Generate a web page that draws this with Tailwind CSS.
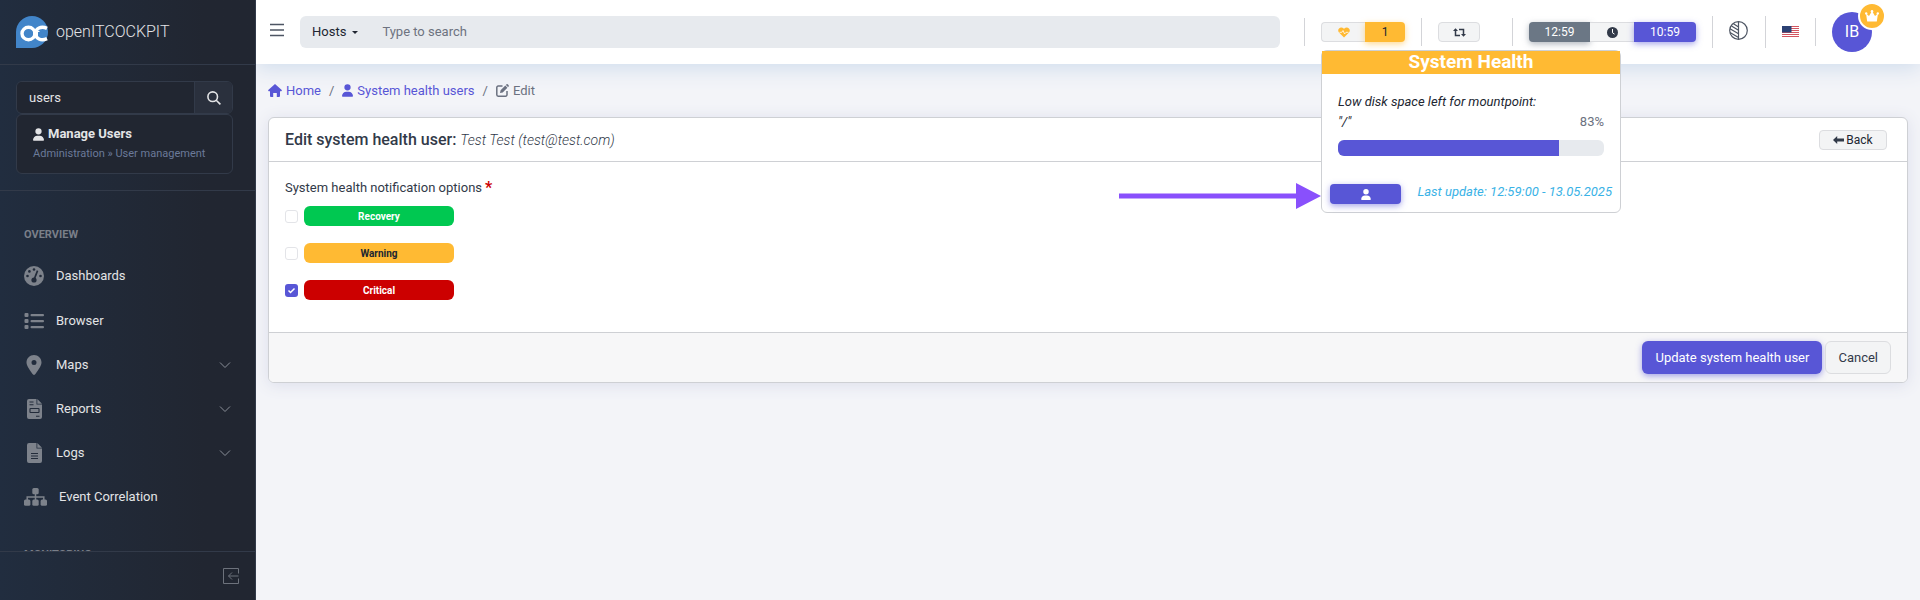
<!DOCTYPE html>
<html lang="en">
<head>
<meta charset="utf-8">
<title>openITCOCKPIT</title>
<script src="https://cdn.jsdelivr.net/npm/@tailwindcss/browser@4"></script>
</head>
<body class="font-[Roboto,sans-serif] text-[13px] text-[#323a49] bg-[#f3f4f8] min-h-screen flex">
<svg class="hidden">
  <symbol id="user" viewBox="0 0 448 512"><path d="M224 256A128 128 0 1 0 224 0a128 128 0 1 0 0 256zm-45.700 48C79.800 304 0 383.800 0 482.300C0 498.700 13.300 512 29.700 512H418.300c16.400 0 29.700-13.300 29.700-29.700C448 383.800 368.200 304 269.700 304H178.300z"/></symbol>
  <symbol id="chev" viewBox="0 0 12 8"><path d="M1 1.500 6 6.500 11 1.500" fill="none" stroke="currentColor" stroke-width="1"/></symbol>
</svg>

<aside class="relative z-10 w-64 h-screen shrink-0 flex flex-col border-r border-[#323a49] bg-linear-to-r from-[#212d3f] to-[#212631] to-80% text-[#e3e4e6]">
  <a href="#" class="h-16 shrink-0 flex items-center gap-2 px-4"><svg class="size-8" viewBox="0 0 32 32"><path d="M16 0A16 16 0 1 1 16 32H0V16A16 16 0 0 1 16 0Z" fill="#4285c9"/><g fill="none" stroke="#fff" stroke-width="3.400"><ellipse cx="12.500" cy="17.500" rx="6.500" ry="6.200"/><path d="M31 12.400C25 9.500 19.500 12.500 19.500 17.500S25 25.500 31 22.600"/></g><path d="M17.500 15.500V20M19.500 15.500h4M21.500 15.500V20" stroke="#fff" stroke-width="1" fill="none"/></svg>
    <span class="text-base font-light">openITCOCKPIT</span>
  </a>
  <div class="pl-4 pt-4 pb-4 pr-[22px] border-y border-[#323a49]">
    <form class="flex h-[33px] border border-[#323a49] rounded-md overflow-hidden">
      <input aria-label="Search menu" value="users" class="min-w-0 flex-1 bg-[#212631] px-3 outline-none">
      <button type="button" aria-label="Search" class="w-[38px] bg-[#2a303d] border-l border-[#323a49] flex items-center justify-center"><svg class="size-3.5" viewBox="0 0 14 14" fill="none" stroke="currentColor" stroke-width="1.600"><circle cx="5.700" cy="5.700" r="4.800"/><path d="m9.200 9.200 4.200 4.200"/></svg></button>
    </form>
    <a href="#" class="block border border-[#323a49] rounded-md bg-[#212631] px-4 py-[9px]">
      <span class="flex items-center gap-1 font-bold leading-5"><svg class="w-[11px] h-[13px]" fill="currentColor"><use href="#user"/></svg>Manage Users</span>
      <span class="block text-[11px] leading-5 text-[#6b7a99]">Administration » User management</span>
    </a>
  </div>
  <nav class="flex-1 min-h-0 overflow-hidden px-6 pt-9">
    <h2 class="text-[11px] leading-4 font-bold text-[#7a7f89]">OVERVIEW</h2>
    <ul class="pt-[11px]">
      <li><a href="#" class="flex items-center h-11 gap-3"><svg class="size-5 text-[#7d828b]" viewBox="0 0 20 20"><circle cx="10" cy="10" r="10" fill="currentColor"/><g fill="#222b3a"><circle cx="10" cy="3.500" r="1.300"/><circle cx="5.400" cy="5.400" r="1.300"/><circle cx="3.500" cy="10" r="1.300"/><circle cx="16.500" cy="10" r="1.300"/><circle cx="10" cy="14" r="2.600"/><path d="m12.800 4.300 1.500.6-3.400 9-1.600-.6z"/></g></svg>Dashboards</a></li>
      <li><a href="#" class="flex items-center h-[45px] gap-3"><svg class="size-5 text-[#7d828b]" viewBox="0 0 20 20" fill="currentColor"><rect x="0.500" y="2" width="4" height="4" rx="1"/><rect x="0.500" y="8" width="4" height="4" rx="1"/><rect x="0.500" y="14" width="4" height="4" rx="1"/><rect x="6.500" y="2.900" width="13.500" height="2.300" rx="1"/><rect x="6.500" y="8.900" width="13.500" height="2.300" rx="1"/><rect x="6.500" y="14.900" width="13.500" height="2.300" rx="1"/></svg>Browser</a></li>
      <li><a href="#" class="flex items-center h-11 gap-3"><svg class="size-5 text-[#7d828b]" viewBox="-64 0 512 512" fill="currentColor"><path d="M215.700 499.200C267 435 384 279.400 384 192C384 86 298 0 192 0S0 86 0 192c0 87.400 117 243 168.300 307.200c12.300 15.300 35.100 15.300 47.400 0zM192 128a64 64 0 1 1 0 128 64 64 0 1 1 0-128z"/></svg><span class="flex-1">Maps</span><svg class="w-3 h-2 text-[#8a8f98]"><use href="#chev"/></svg></a></li>
      <li><a href="#" class="flex items-center h-11 gap-3"><svg class="size-5 text-[#7d828b]" viewBox="0 0 20 20"><path fill="currentColor" d="M5 0H12.500v5.500H18V18a2 2 0 0 1-2 2H5a2 2 0 0 1-2-2V2A2 2 0 0 1 5 0ZM13.300 0 18 4.700h-4.700z"/><g stroke="#222b3a" stroke-width="1.100" fill="none"><path d="M5.500 3H9.500M5.500 5.700H9.500M12 17.300h3.500"/><rect x="6" y="9.500" width="9" height="4" rx=".5"/></g></svg><span class="flex-1">Reports</span><svg class="w-3 h-2 text-[#8a8f98]"><use href="#chev"/></svg></a></li>
      <li><a href="#" class="flex items-center h-11 gap-3"><svg class="size-5 text-[#7d828b]" viewBox="0 0 20 20"><path fill="currentColor" d="M5 0H12.500v5.500H18V18a2 2 0 0 1-2 2H5a2 2 0 0 1-2-2V2A2 2 0 0 1 5 0ZM13.300 0 18 4.700h-4.700z"/><path d="M7 10.500h7M7 13h7M7 15.500h7" stroke="#222b3a" stroke-width="1.200"/></svg><span class="flex-1">Logs</span><svg class="w-3 h-2 text-[#8a8f98]"><use href="#chev"/></svg></a></li>
      <li><a href="#" class="flex items-center h-11 gap-3"><svg class="w-[23px] h-[18px] text-[#7d828b]" viewBox="0 0 23 18" fill="currentColor"><rect x="8.300" y="0" width="6.400" height="6.200" rx="1.500"/><rect x="0" y="11.500" width="6.400" height="6.200" rx="1.500"/><rect x="8.300" y="11.500" width="6.400" height="6.200" rx="1.500"/><rect x="16.600" y="11.500" width="6.400" height="6.200" rx="1.500"/><path d="M3.200 12V9h16.600v3M11.500 5v7" fill="none" stroke="currentColor" stroke-width="1.500"/></svg>Event Correlation</a></li>
    </ul>
    <h2 class="pt-7 text-[11px] leading-4 font-bold text-[#7a7f89]">MONITORING</h2>
  </nav>
  <div class="h-[49px] shrink-0 border-t border-[#323a49] flex items-center justify-end pr-4">
    <button type="button" aria-label="Collapse sidebar" class="text-[#6d727c]"><svg class="size-4" viewBox="0 0 16 16" fill="none" stroke="currentColor"><path d="M15.500 5.500v-5H.5v15h15v-5M15.500 8H5.500M9 4.500 5.500 8 9 11.500"/></svg></button>
  </div>
</aside>

<div class="flex-1 min-w-0 flex flex-col">
  <header class="h-16 shrink-0 bg-white shadow-[0_4px_20px_#cfdcec] flex items-center pl-3.5 pr-12">
    <button type="button" aria-label="Toggle menu" class="mr-4 mb-1"><svg class="w-3.5 h-4" viewBox="0 0 14 16" stroke="#4d5563" stroke-width="1.300"><path d="M0 2.500h14M0 8h14M0 13.500h14"/></svg></button>
    <div class="flex-1 flex h-8 rounded-md bg-[#e7eaee] overflow-hidden">
      <button type="button" class="flex items-center gap-1.5 px-3 text-[#212631]">Hosts<svg class="w-1.5 h-[3px]" viewBox="0 0 6 3"><path d="M0 0h6L3 3z" fill="#212631"/></svg></button>
      <input aria-label="Search" placeholder="Type to search" class="flex-1 px-3 outline-none placeholder:text-[#6d7380]">
    </div>
    <div class="ml-6 h-7 border-l border-[#d3d4d8]"></div>
    <div class="relative ml-4">
      <button type="button" aria-label="System health: 1" class="flex h-5 rounded text-xs">
        <span class="w-11 flex items-center justify-center rounded-l bg-[#f3f4f5] border border-r-0 border-[#dcdde0]"><svg class="w-3 h-[11px]" viewBox="0 0 12 11"><path d="M6 10.500 1 5.600C-1.500 2.500 2.500-1.500 6 1.800 9.500-1.500 13.500 2.500 11 5.600z" fill="#ffb932"/><path d="M1.500 5.300h2.300L5 3.500l1.600 3.500L8 5.300h2.500" fill="none" stroke="#fff" stroke-width=".8"/></svg></span>
        <span class="w-10 flex items-center justify-center rounded-r bg-[#ffba33] text-[#212631] shadow-[0_2px_6px_#ffba3388]">1</span>
      </button>
      <section class="absolute z-20 left-0 top-7 w-[300px] bg-white border border-[#ced0d4] rounded-md">
        <h2 class="h-[23px] flex items-center justify-center bg-[#ffba33] text-white text-[19px] font-bold">System Health</h2>
        <div class="px-4 pt-[18px] leading-5">
          <p class="italic text-[#212631]">Low disk space left for mountpoint:</p>
          <div class="flex justify-between"><span class="italic text-[#212631]">"/"</span><span class="text-[#6b7180]">83%</span></div>
          <div role="progressbar" aria-valuenow="83" aria-label="Disk usage" class="mt-2 h-4 rounded-md bg-[#e7eaee] overflow-hidden"><div class="h-full bg-[#5856d6]" style="width:83%"></div></div>
        </div>
        <div class="flex items-center justify-between mt-6 px-2 pb-2 pt-1">
          <button type="button" aria-label="System health users" class="w-[71px] h-5 rounded bg-[#5856d6] text-white flex items-center justify-center shadow-[0_2px_6px_#5856d688]"><svg class="w-2.5 h-[11px]" fill="currentColor"><use href="#user"/></svg></button>
          <span class="italic leading-4 mb-1 text-[#39b2e6]">Last update: 12:59:00 - 13.05.2025</span>
        </div>
      </section>
      <svg class="absolute z-20 right-full top-[161px] w-[202px] h-[26px]" viewBox="0 0 202 26" fill="#8950fc"><path d="M0 10.500h177V0l25 13-25 13V15.500H0z"/></svg>
    </div>
    <div class="ml-4 h-7 border-l border-[#d3d4d8]"></div>
    <button type="button" aria-label="Reload" class="ml-4 w-[42px] h-5 rounded bg-[#f3f4f5] border border-[#dcdde0] flex items-center justify-center"><svg class="w-[13px] h-[9px]" viewBox="0 0 13 9" fill="none" stroke="#323a49" stroke-width="1.500"><path d="M2.500 1.500V7.500H7M6 1.500h4.500V7"/><path d="M0 3 2.500.3 5 3zM8 6l2.500 2.700L13 6z" fill="#323a49" stroke="none"/></svg></button>
    <div class="ml-8 h-7 border-l border-[#d3d4d8]"></div>
    <div class="ml-4 flex h-5 text-xs text-white">
      <span class="w-[61px] flex items-center justify-center rounded-l bg-[#6b7785] shadow-[0_2px_6px_#6b778588]">12:59</span>
      <span class="w-11 flex items-center justify-center bg-[#f3f4f5] border-y border-[#dcdde0]"><svg class="size-[11px]" viewBox="0 0 11 11"><circle cx="5.500" cy="5.500" r="5.500" fill="#323a49"/><path d="M5.500 2v3.800l2 1.300" fill="none" stroke="#fff"/></svg></span>
      <span class="w-[62px] flex items-center justify-center rounded-r bg-[#5856d6] shadow-[0_2px_6px_#5856d688]">10:59</span>
    </div>
    <div class="ml-4 h-8 border-l border-[#d3d4d8]"></div>
    <button type="button" aria-label="Theme" class="ml-4 mb-1"><svg class="size-[19px]" viewBox="0 0 19 19" fill="none" stroke="#4d5563" stroke-width="1.200"><circle cx="9.500" cy="9.500" r="8.800"/><path d="M9.500.7v17.600M4.500 2.700l5 3.300M2.500 5l7 4.300M1 7.800l8.500 5M1 11.500l8.500 5"/></svg></button>
    <div class="ml-[17px] h-8 border-l border-[#d3d4d8]"></div>
    <button type="button" aria-label="Language" class="ml-4"><svg class="w-[17px] h-3" viewBox="0 0 17 12"><path fill="#fff" d="M0 0h17v12H0z"/><path d="M0 .5h17M0 2.500h17M0 4.500h17M0 6.500h17M0 8.500h17M0 10.500h17" stroke="#d35560"/><path d="M0 0h9.500v6.500H0z" fill="#2b4173"/></svg></button>
    <div class="ml-4 h-7 border-l border-[#d3d4d8]"></div>
    <button type="button" aria-label="Account" class="relative ml-4 size-10 rounded-full bg-[#5856d6] text-white text-base">IB<span class="absolute -top-2.5 -right-3.5 size-7 rounded-full border-2 border-white bg-[#ffba33] flex items-center justify-center"><svg class="w-3.5 h-3" viewBox="0 0 14 12" fill="#fff"><path d="M1 3.500 4 6 7 1l3 5 3-2.500L11.800 11.500H2.200z"/><circle cx="1.200" cy="3.400" r="1.200"/><circle cx="7" cy="1.400" r="1.300"/><circle cx="12.800" cy="3.400" r="1.200"/></svg></span></button>
  </header>

  <main class="px-3">
    <nav aria-label="Breadcrumb" class="h-[53px] flex items-center gap-2 text-[#6b7180]">
      <a href="#" class="flex items-center gap-1 text-[#5856d6]"><svg class="w-3.5 h-[13px]" viewBox="0 0 14 13" fill="currentColor"><path d="M7 0 14 6.300 13.300 7.200H12V12a1 1 0 0 1-1 1H8.800V9H5.200v4H3a1 1 0 0 1-1-1V7.200H.7L0 6.300z"/></svg>Home</a><span>/</span>
      <a href="#" class="flex items-center gap-1 text-[#5856d6]"><svg class="w-[11px] h-[13px]" fill="currentColor"><use href="#user"/></svg>System health users</a><span>/</span>
      <span class="flex items-center gap-1"><svg class="size-[13px]" viewBox="0 0 13 13"><path d="M6.500 2H2.200A1.400 1.400 0 0 0 .8 3.400v7.400a1.400 1.400 0 0 0 1.400 1.400h7.400a1.400 1.400 0 0 0 1.400-1.400V7" fill="none" stroke="currentColor" stroke-width="1.500"/><path d="M4 9l.6-2.700L9.300 1.600l2.100 2.100L6.700 8.400zM9.900 1l.7-.7c.8-.8 2.900 1.300 2.100 2.100l-.7.7z" fill="currentColor"/></svg>Edit</span>
    </nav>
    <form class="bg-white border border-[#ced0d4] rounded-md shadow-[0_2px_16px_#dcdeeb] overflow-hidden">
      <div class="h-11 flex items-center justify-between border-b border-[#ced0d4] pl-4 pr-5">
        <h1 class="text-base font-medium">Edit system health user: <span class="text-sm font-light italic">Test Test (test@test.com)</span></h1>
        <button type="button" class="w-[68px] h-5 rounded bg-[#f3f4f5] border border-[#dcdde0] text-xs text-[#212631] flex items-center justify-center gap-0.5"><svg class="w-[11px] h-2" viewBox="0 0 11 8" fill="#323a49"><path d="M0 4 4.200 0v2.500H11v3H4.200V8z"/></svg>Back</button>
      </div>
      <div role="group" aria-labelledby="options" class="px-4 pt-4 pb-8">
        <p id="options" class="flex gap-[3px] leading-5">System health notification options<span class="text-base leading-5 font-bold text-[#cc0000]">*</span></p>
        <div class="mt-2 flex flex-col gap-[17px] text-[10px] font-bold text-white">
          <label class="flex items-center gap-1.5"><input type="checkbox" class="appearance-none size-[13px] border border-[#e3e4e8] rounded-[3px]"><span class="w-[150px] h-5 flex items-center justify-center rounded-md bg-[#00c851]">Recovery</span></label>
          <label class="flex items-center gap-1.5"><input type="checkbox" class="appearance-none size-[13px] border border-[#e3e4e8] rounded-[3px]"><span class="w-[150px] h-5 flex items-center justify-center rounded-md bg-[#ffba33] text-[#212631]">Warning</span></label>
          <label class="flex items-center gap-1.5"><span class="grid size-[13px]"><input type="checkbox" checked class="col-start-1 row-start-1 appearance-none size-[13px] bg-[#5856d6] rounded-[3px]"><svg class="col-start-1 row-start-1 size-[13px]" viewBox="0 0 13 13" fill="none" stroke="#fff" stroke-width="1.500"><path d="m3.500 6.500 2 2 4-4"/></svg></span><span class="w-[150px] h-5 flex items-center justify-center rounded-md bg-[#cc0000]">Critical</span></label>
        </div>
      </div>
      <div class="h-[50px] flex items-center justify-end gap-[3px] px-4 border-t border-[#ced0d4] bg-[#f7f7f8]">
        <button type="button" class="h-[33px] px-[13px] rounded-md bg-[#5856d6] text-white shadow-[0_2px_6px_#5856d688]">Update system health user</button>
        <button type="button" class="h-[33px] px-3 rounded-md bg-[#f3f4f5] border border-[#dcdde0]">Cancel</button>
      </div>
    </form>
  </main>
</div>
</body>
</html>
